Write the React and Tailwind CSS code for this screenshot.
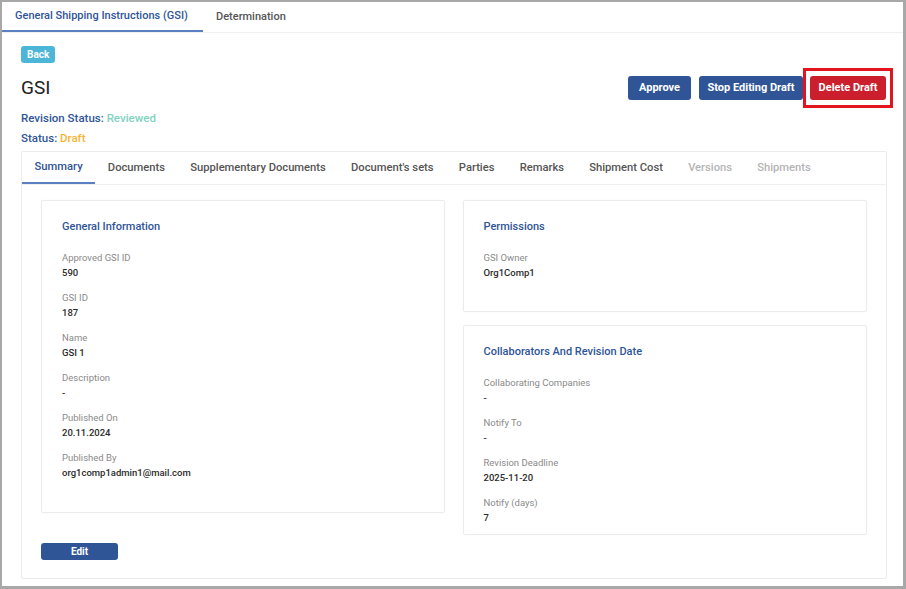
import React from "react";

const font = { fontFamily: "Roboto, 'Liberation Sans', sans-serif" };

const general = [
  ["Approved GSI ID", "590"],
  ["GSI ID", "187"],
  ["Name", "GSI 1"],
  ["Description", "-"],
  ["Published On", "20.11.2024"],
  ["Published By", "org1comp1admin1@mail.com"],
];

const collaborators = [
  ["Collaborating Companies", "-"],
  ["Notify To", "-"],
  ["Revision Deadline", "2025-11-20"],
  ["Notify (days)", "7"],
];

const tabs = [
  ["Summary", "active"],
  ["Documents", ""],
  ["Supplementary Documents", ""],
  ["Document's sets", ""],
  ["Parties", ""],
  ["Remarks", ""],
  ["Shipment Cost", ""],
  ["Versions", "off"],
  ["Shipments", "off"],
];

function Field({ label, value }) {
  return (
    <div className="flex flex-col">
      <span className="text-[9.5px] leading-[14px] text-[#8a8a8a]">{label}</span>
      <span className="text-[9.5px] leading-[16px] font-medium text-[#2b2b2b]">{value}</span>
    </div>
  );
}

function InfoCard({ title, items, className = "" }) {
  return (
    <div className={`border border-[#ececec] rounded-[2px] bg-white px-5 pt-[19px] shadow-[0_0_2px_rgba(0,0,0,0.04)] ${className}`}>
      <h3 className="text-[11px] leading-[14px] font-medium text-[#2f5597]">{title}</h3>
      <div className="mt-[17px] flex flex-col gap-[10px]">
        {items.map(([l, v]) => (
          <Field key={l} label={l} value={v} />
        ))}
      </div>
    </div>
  );
}

export default function App() {
  return (
    <div
      className="w-[906px] h-[589px] overflow-hidden bg-white border-t-2 border-l-2 border-r-[3px] border-b-[3px] border-[#a8a8a8] flex flex-col"
      style={font}
    >
      {/* top tabs */}
      <div className="flex h-[31px] border-b border-[#f0f0f0] shrink-0">
        <div className="w-[201px] flex items-center pl-[13px] border-b-2 border-[#5b80c2] text-[11px] font-medium text-[#2f5597] whitespace-nowrap">
          General Shipping Instructions (GSI)
        </div>
        <div className="flex items-center pl-[13px] text-[11px] font-medium text-[#555]">Determination</div>
      </div>

      <div className="flex-1 px-[19px] pt-[13px] flex flex-col">
        <button className="self-start h-[17px] px-[6px] rounded-[3px] bg-[#4cb6d9] text-white text-[10px] font-bold leading-[17px]">
          Back
        </button>

        <div className="flex items-center justify-between mt-[13px] h-[24px]">
          <h1 className="text-[19px] leading-[24px] text-[#222]">GSI</h1>
          <div className="flex items-center mr-[-9px]">
            <button className="h-[24px] w-[63px] rounded-[3px] bg-[#2f5597] text-white text-[11px] font-bold">Approve</button>
            <button className="ml-[8px] h-[24px] w-[104px] rounded-[3px] bg-[#2f5597] text-white text-[11px] font-bold">Stop Editing Draft</button>
            <div className="border-[3px] border-[#e4141f] px-[4px] py-[5px] -my-[8px]">
              <button className="h-[24px] w-[76px] rounded-[3px] bg-[#cc1f2e] text-white text-[11px] font-bold block">Delete Draft</button>
            </div>
          </div>
        </div>

        <div className="text-[11.5px] font-medium leading-[14px] mt-[11px]">
          <span className="text-[#2f5597]">Revision Status: </span>
          <span className="text-[#7fd3c0]">Reviewed</span>
        </div>
        <div className="text-[11.5px] font-medium leading-[14px] mt-[6px]">
          <span className="text-[#2f5597]">Status: </span>
          <span className="text-[#f5b533]">Draft</span>
        </div>

        {/* main card */}
        <div className="mt-[6px] w-[866px] h-[428px] border border-[#ececec] rounded-[2px] flex flex-col">
          <div className="flex h-[33px] border-b border-[#efefef] shrink-0">
            {tabs.map(([t, s]) => (
              <div
                key={t}
                className={`flex items-center px-[12.6px] text-[11.2px] font-medium whitespace-nowrap ${
                  s === "active"
                    ? "border-b-2 border-[#5b80c2] text-[#2f5597]"
                    : s === "off"
                    ? "text-[#b5b5b5]"
                    : "text-[#555]"
                }`}
              >
                {t}
              </div>
            ))}
          </div>

          <div className="px-[19px] pt-[15px] flex gap-[18px]">
            <div className="flex flex-col w-[404px]">
              <InfoCard title="General Information" items={general} className="h-[313px]" />
              <button className="mt-[30px] self-start w-[77px] h-[17px] rounded-[3px] bg-[#2f5597] text-white text-[10px] font-bold leading-[17px]">
                Edit
              </button>
            </div>
            <div className="flex flex-col gap-[13px] w-[405px]">
              <InfoCard title="Permissions" items={[["GSI Owner", "Org1Comp1"]]} className="h-[112px]" />
              <InfoCard title="Collaborators And Revision Date" items={collaborators} className="h-[210px]" />
            </div>
          </div>
        </div>
      </div>
    </div>
  );
}
